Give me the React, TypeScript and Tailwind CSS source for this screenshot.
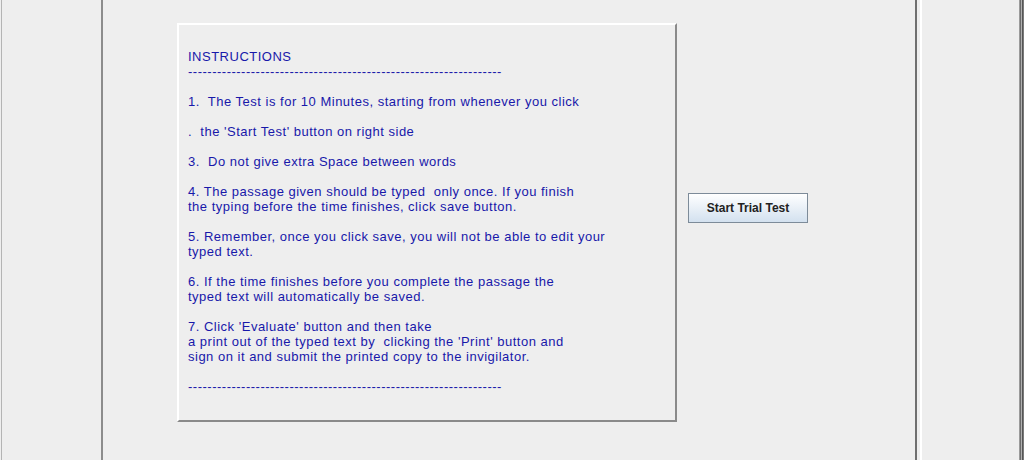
import React from 'react';

const DASHES = '-'.repeat(65);

const lines: string[] = [
  'INSTRUCTIONS',
  DASHES,
  '',
  '1.  The Test is for 10 Minutes, starting from whenever you click',
  '',
  '.  the \'Start Test\' button on right side',
  '',
  '3.  Do not give extra Space between words',
  '',
  '4. The passage given should be typed  only once. If you finish',
  'the typing before the time finishes, click save button.',
  '',
  '5. Remember, once you click save, you will not be able to edit your',
  'typed text.',
  '',
  '6. If the time finishes before you complete the passage the',
  'typed text will automatically be saved.',
  '',
  '7. Click \'Evaluate\' button and then take',
  'a print out of the typed text by  clicking the \'Print\' button and',
  'sign on it and submit the printed copy to the invigilator.',
  '',
  DASHES,
];

export default function App() {
  return (
    <div className="flex h-[460px] w-[1024px] overflow-hidden bg-[#eeeeee] font-['Liberation_Sans',Arial,sans-serif]">
      {/* left strip */}
      <div className="w-[101px] pl-px">
        <div className="h-full border-l border-[#b4b4b4]" />
      </div>

      {/* main panel */}
      <div className="flex w-[816px] border-l-2 border-r-2 border-l-[#8c8c8c] border-r-[#6f6f6f]">
        <div className="ml-[74px] mt-[23px] flex items-start">
          <div className="h-[399px] w-[500px] border-2 border-t-white border-l-white border-b-[#8a8a8a] border-r-[#8a8a8a] pl-[9px] pt-[24px]">
            {lines.map((line, i) => (
              <div key={i} className="h-[15px] whitespace-pre text-[13px] leading-[15px] tracking-[0.5px] text-[#1818aa]">
                {line}
              </div>
            ))}
          </div>
          <button className="ml-[11px] mt-[170px] h-[30px] w-[120px] border border-[#7d8b99] bg-gradient-to-b from-white to-[#d3e1ef] text-[12px] font-bold text-[#222222]">
            Start Trial Test
          </button>
        </div>
      </div>

      {/* right strip */}
      <div className="flex flex-1 pl-[3px]">
        <div className="flex-1 border-l-2 border-white" />
        <div className="flex">
          <div className="w-px bg-[#9a9a9a]" />
          <div className="w-px bg-[#6a6a6a]" />
          <div className="w-px bg-[#b0b0b0]" />
          <div className="w-px bg-[#555555]" />
          <div className="w-px bg-[#7a7a7a]" />
        </div>
      </div>
    </div>
  );
}
